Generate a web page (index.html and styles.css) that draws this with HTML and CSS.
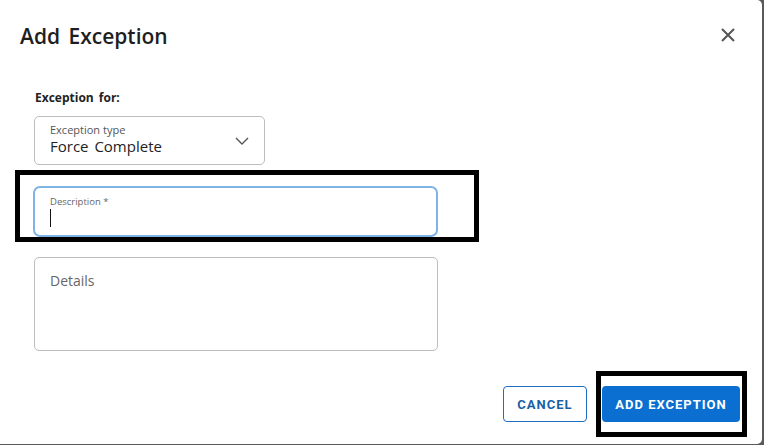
FILE: index.html
```html
<!DOCTYPE html>
<html>
<head>
<meta charset="utf-8">
<link rel="stylesheet" href="styles.css">
</head>
<body>
<div class="dialog">
  <div class="header">
    <h1 class="title">Add Exception</h1>
    <button class="close" aria-label="Close">
      <svg width="16" height="16" viewBox="0 0 16 16"><path d="M2 2 L14 14 M14 2 L2 14" stroke="#555" stroke-width="2" fill="none"/></svg>
    </button>
  </div>
  <div class="body">
    <div class="section-label">Exception for:</div>
    <div class="select">
      <div class="select-text">
        <div class="small-label">Exception type</div>
        <div class="value">Force Complete</div>
      </div>
      <svg class="chevron" width="14" height="8" viewBox="0 0 14 8"><path d="M1 1 L7 7 L13 1" stroke="#555" stroke-width="1.4" fill="none"/></svg>
    </div>
    <div class="desc-wrap">
      <div class="input focused">
        <div class="tiny-label">Description *</div>
        <div class="caret"></div>
      </div>
      <div class="annot annot-desc"></div>
    </div>
    <div class="textarea">
      <div class="placeholder">Details</div>
    </div>
  </div>
  <div class="footer">
    <button class="btn btn-outline">CANCEL</button>
    <div class="primary-wrap">
      <button class="btn btn-primary">ADD EXCEPTION</button>
      <div class="annot annot-btn"></div>
    </div>
  </div>
</div>
</body>
</html>
```
FILE: styles.css
```css
* { box-sizing: border-box; }
html, body { margin: 0; padding: 0; }
body {
  width: 764px;
  height: 445px;
  background: #5a5a5a;
  font-family: "Open Sans", "Noto Sans", sans-serif;
  overflow: hidden;
}
.dialog {
  width: 762px;
  height: 444px;
  background: #fff;
  border-radius: 0 5px 5px 0;
  display: flex;
  flex-direction: column;
  position: relative;
}
.header {
  display: flex;
  align-items: flex-start;
  justify-content: space-between;
  padding: 17px 26px 0 20px;
  height: 58px;
}
.title {
  margin: 5px 0 0 0;
  font-size: 21px;
  font-weight: 650;
  color: #1e1e1e;
  word-spacing: 3px;
  line-height: 28px;
}
.close {
  border: 0;
  background: none;
  padding: 0;
  width: 16px;
  height: 16px;
  display: block;
  margin-top: 10px;
}
.close svg { display: block; }
.body {
  padding: 32px 0 0 34px;
  display: flex;
  flex-direction: column;
  align-items: flex-start;
}
.section-label {
  font-size: 12px;
  font-weight: 700;
  color: #222;
  margin-left: 1px;
  line-height: 16px;
  word-spacing: 2px;
}
.select {
  margin-top: 10px;
  width: 231px;
  height: 49px;
  border: 1px solid #bdbdbd;
  border-radius: 5px;
  display: flex;
  align-items: center;
  justify-content: space-between;
  padding: 0 15px 3px 15px;
}
.small-label {
  font-size: 11px;
  color: #555;
  line-height: 14px;
}
.value {
  font-size: 15px;
  color: #222;
  line-height: 19px;
  word-spacing: 2px;
}
.chevron { display: block; margin-top: 4px; }
.desc-wrap {
  position: relative;
  margin-top: 21px;
  margin-left: -1px;
}
.input {
  width: 405px;
  height: 51px;
  border: 2px solid #7fb2e5;
  border-radius: 7px;
  padding: 7px 15px;
}
.tiny-label {
  font-size: 9.5px;
  color: #666;
  line-height: 13px;
}
.caret {
  width: 1px;
  height: 18px;
  background: #111;
  margin-top: 1px;
}
.annot {
  position: absolute;
  border: 5px solid #000;
  pointer-events: none;
}
.annot-desc {
  left: -18px;
  top: -16px;
  width: 464px;
  height: 72px;
}
.textarea {
  margin-top: 20px;
  width: 404px;
  height: 94px;
  border: 1px solid #bdbdbd;
  border-radius: 5px;
  padding: 13px 15px;
}
.placeholder {
  font-size: 14px;
  color: #666;
  line-height: 20px;
}
.footer {
  margin-top: auto;
  display: flex;
  justify-content: flex-end;
  align-items: center;
  gap: 15px;
  padding: 0 22px 22px 0;
}
.btn {
  font-family: Roboto, "Liberation Sans", sans-serif;
  font-weight: 700;
  font-size: 13px;
  letter-spacing: 1px;
  height: 36px;
  border-radius: 4px;
  cursor: pointer;
}
.btn-outline {
  width: 84px;
  background: #fff;
  border: 1px solid #1b6ec2;
  color: #1b5fa8;
}
.btn-primary {
  width: 138px;
  background: #0a6fd0;
  border: 0;
  color: #fff;
  display: block;
}
.primary-wrap { position: relative; }
.annot-btn {
  left: -6px;
  top: -15px;
  width: 151px;
  height: 66px;
}
```
